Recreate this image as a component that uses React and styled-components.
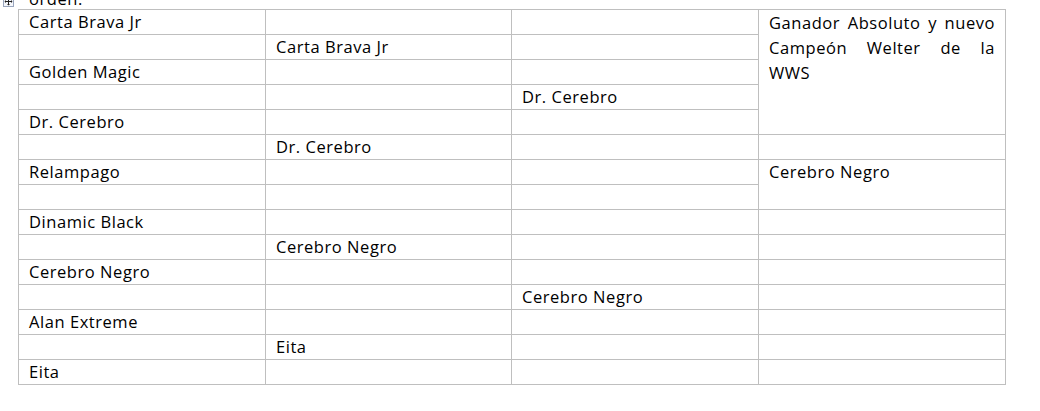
import React from 'react'
import styled, { createGlobalStyle } from 'styled-components'

const GlobalStyle = createGlobalStyle`
  html, body {
    margin: 0;
    background: #ffffff;
  }
  body {
    font-family: "Open Sans", "Liberation Sans", sans-serif;
    color: #000000;
  }
`

// each row of the bracket, left to right; span = rows the cell covers
const rows = [
  [{ text: 'Carta Brava Jr' }, {}, {}, { lines: ['Ganador Absoluto y nuevo', 'Campeón Welter de la', 'WWS'], span: 5 }],
  [{}, { text: 'Carta Brava Jr' }, {}],
  [{ text: 'Golden Magic' }, {}, {}],
  [{}, {}, { text: 'Dr. Cerebro' }],
  [{ text: 'Dr. Cerebro' }, {}, {}],
  [{}, { text: 'Dr. Cerebro' }, {}, {}],
  [{ text: 'Relampago' }, {}, {}, { text: 'Cerebro Negro', span: 2 }],
  [{}, {}, {}],
  [{ text: 'Dinamic Black' }, {}, {}, {}],
  [{}, { text: 'Cerebro Negro' }, {}, {}],
  [{ text: 'Cerebro Negro' }, {}, {}, {}],
  [{}, {}, { text: 'Cerebro Negro' }, {}],
  [{ text: 'Alan Extreme' }, {}, {}, {}],
  [{}, { text: 'Eita' }, {}, {}],
  [{ text: 'Eita' }, {}, {}, {}],
]

const MoveHandle = () => (
  <Handle>
    <svg width="11" height="11" viewBox="0 0 11 11">
      <rect x="0.5" y="0.5" width="10" height="10" fill="#f4f6fb" stroke="#9aa6bd" />
      <path d="M5.5 2v7M2 5.5h7" stroke="#222" strokeWidth="1" />
      <path d="M5.5 1.5l-1.5 1.5h3zM5.5 9.5l-1.5-1.5h3zM1.5 5.5l1.5-1.5v3zM9.5 5.5l-1.5-1.5v3z" fill="#222" />
    </svg>
  </Handle>
)

const App = () => {
  return (
    <Page>
      <GlobalStyle />
      <MoveHandle />
      <Intro>orden.</Intro>
      <Bracket>
        {rows.map((row, r) =>
          row.map((cell, c) => (
            <Cell key={`${r}-${c}`} $span={cell.span || 1}>
              {cell.lines
                ? cell.lines.map((line, i) => (
                    <JustifiedLine key={i} $last={i === cell.lines.length - 1}>
                      {line}
                    </JustifiedLine>
                  ))
                : cell.text}
            </Cell>
          ))
        )}
      </Bracket>
    </Page>
  )
}

export default App

const Page = styled.div`
  position: relative;
  height: 411px;
  overflow: hidden;
  padding-left: 18px;
  font-size: 16.5px;
  font-weight: 500;
  letter-spacing: 0.55px;
`

const Handle = styled.div`
  position: absolute;
  left: 3px;
  top: -4px;
  width: 11px;
  height: 11px;
  svg {
    display: block;
  }
`

const Intro = styled.p`
  margin: -11px 0 0 11px;
  line-height: 20px;
`

const Bracket = styled.div`
  display: grid;
  grid-template-columns: 246px 245px 246px 246px;
  grid-auto-rows: 24px;
  gap: 1px;
  padding: 1px;
  width: max-content;
  background: #bfbfbf;
`

const Cell = styled.div`
  grid-row: span ${p => p.$span};
  background: #ffffff;
  padding: 0 10px;
  line-height: 24px;
  white-space: nowrap;
`

const JustifiedLine = styled.div`
  line-height: 25px;
  text-align: ${p => (p.$last ? 'left' : 'justify')};
  text-align-last: ${p => (p.$last ? 'left' : 'justify')};
`
